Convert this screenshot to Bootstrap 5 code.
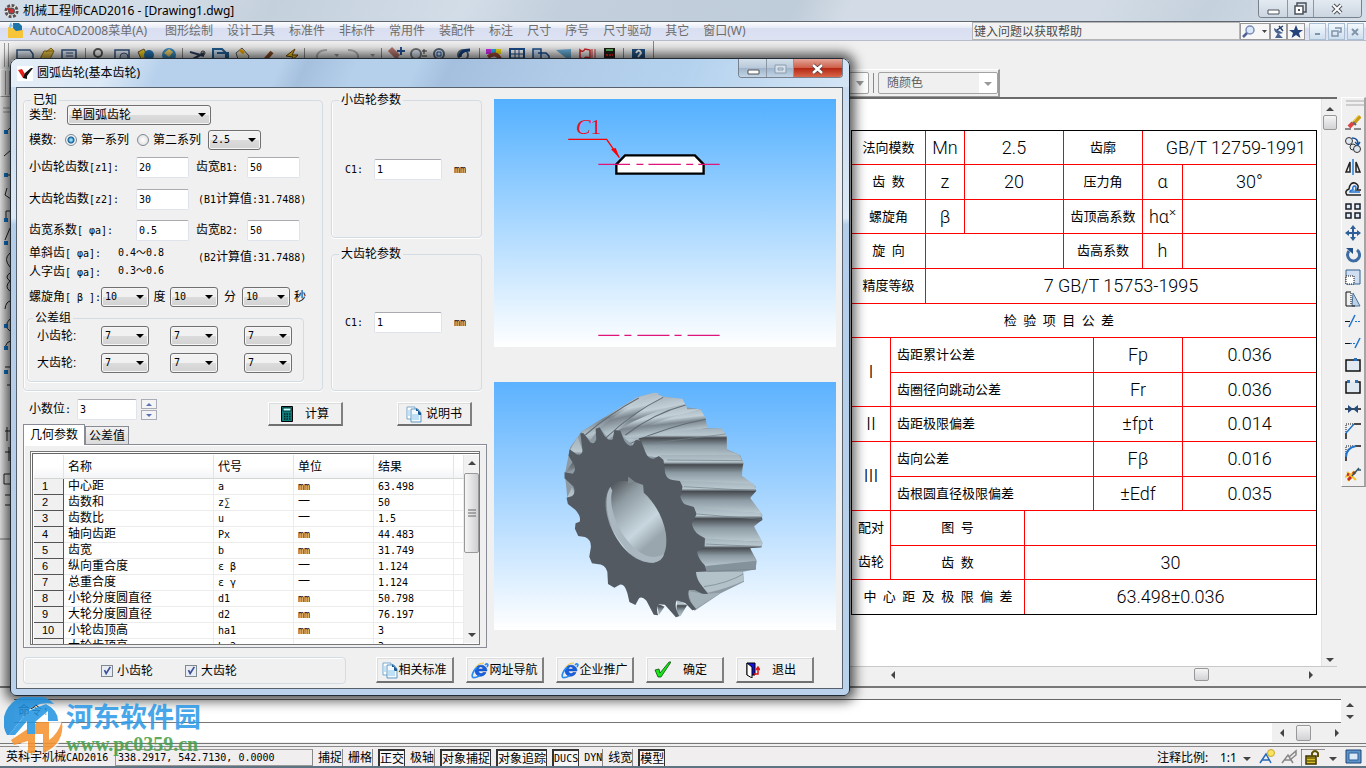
<!DOCTYPE html>
<html lang="zh-CN">
<head>
<meta charset="utf-8">
<meta name="viewport" content="width=device-width, initial-scale=1">
<title>机械工程师CAD2016 - [Drawing1.dwg]</title>
<link href="https://cdn.jsdelivr.net/npm/bootstrap@5.3.0/dist/css/bootstrap.min.css" rel="stylesheet">
<style>
body{font:12px/14px "Liberation Sans","Noto Sans CJK SC",sans-serif;color:#000;background:#f0f0f0;min-height:100vh;overflow:hidden}
.ui{font-family:"Noto Sans","Noto Sans CJK SC",sans-serif}
.ln{font-family:"DejaVu Sans Mono","Noto Sans CJK SC",monospace;font-size:10px}
svg{display:block;flex:none}
button{font:inherit}
/* application frame */
.app-title{height:22px;background:linear-gradient(115deg,#d3dde7 0 12%,#c4d0dc 20%,#d2dde8 34%,#c3cfdc 41%,#bfccd9 58%,#d3dce6 62% 80%,#c5d1dd 88%,#d5dfe9);border-bottom:1px solid #5f6770}
.win-btns{border:1px solid #77828e;border-top:0;border-radius:0 0 4px 4px;height:18px;overflow:hidden}
.win-btns button{border:0;border-right:1px solid #8b97a4;background:linear-gradient(#e3eaf1,#ccd6e1);padding:0;height:17px}
.win-btns button:last-child{border-right:0}
.menu-row{height:19px;background:linear-gradient(#fdfdff,#e6eaf6 35%,#d8dff0 36%,#dee3f4);border-bottom:1px solid #b6bccc}
.menu-row a{color:#6d6d6d;text-decoration:none;padding:0 7px;line-height:20px;white-space:nowrap}
.help-box{width:268px;height:18px;border:1px solid #b5b5b5;border-radius:0;background:#f1f1f1;padding:0 1px;font-size:12px;line-height:16px;color:#333}
.help-box::placeholder{color:#4a4a4a;opacity:1}
.help-btn{height:17px;border:1px solid #9a9a9a;background:#f7f7f7;padding:0}
.mdi-btn{width:17px;height:17px;border:1px solid #a9bfd4;background:linear-gradient(#f2f8fd,#cfdfee);padding:0;margin-right:2px}
.tool-zone{height:56px}
.tools{height:28px}
.vsep{width:1px;height:14px;background:#888}
.prop-bar{height:28px;border:1px solid #fff;border-right:2px solid #9a9a9a;border-bottom-color:#9a9a9a}
.prop-sel{width:120px;height:22px;border:1px solid #a3a3a3;border-radius:2px;background-color:#f0f0f0;color:#5f5f5f;padding:0 8px;font-size:12px;line-height:18px}
.work{flex:1 1 auto;min-height:0}
.strip{width:18px;border-right:1px solid #777;background:#f0f0f0}
.sheet{background:#fff;border-top:2px solid #6b6b6b}
.sb-v{width:16px;background:#f0f0f0;border-left:1px solid #e3e3e3}
.sb-h{height:16px;background:#f0f0f0;border-top:1px solid #c9c9c9}
.thumb{border:1px solid #989898;border-radius:2px;background:linear-gradient(#f5f5f5,#d2d2d6)}
.up,.dn,.lf,.rt{width:0;height:0;border:4px solid transparent;flex:none}
.up{border-bottom-color:#444;border-top-width:0}.dn{border-top-color:#444;border-bottom-width:0}
.lf{border-right-color:#444;border-left-width:0}.rt{border-left-color:#444;border-right-width:0}
.palette{width:25px;border:1px solid #fff;border-right:2px solid #a5a5a5;border-bottom:1px solid #8e8e8e}
.palette button{border:0;background:none;padding:3px 3px;height:22px}
/* drawing table */
.spec{width:465px;table-layout:fixed;border-collapse:collapse;outline:1px solid #000;outline-offset:-1px;font:300 18px/20px Roboto,"Noto Sans CJK SC",sans-serif;margin:31px 4px 0 0}
.spec td{border:1px solid #f00;padding:0;text-align:center;vertical-align:middle;white-space:pre}
.spec tr{height:34px}.spec tr.tall{height:35px}
.spec .cn{font-size:13px;line-height:20px;font-weight:400}
.spec .lt{text-align:left;padding-left:6px}
.spec .rt-txt{text-align:right;padding-right:10px}
.spec sup{line-height:10px}
.pair{line-height:34px}
/* command panel and status bar */
.cmd{height:56px;border-top:2px solid #777;padding:11px 8px 0 14px;background:#f0f0f0}
.cmd-hist{height:24px;background:#fff;border-top:1px solid #666;border-bottom:1px solid #777}
.cmd-in{height:19px;background:#fff;border:0;border-radius:0;padding:0 4px;font-size:12px}
.status{height:22px;border-top:1px solid #8a8a8a;padding:2px 4px 0 6px;background:#f0eeee;white-space:pre;border-bottom:2px solid #5f7482;line-height:17px}
.status-rule{height:1px;background:#777;margin-top:1px;margin-bottom:2px}
.st-coord{width:198px;border:1px solid #999;border-right-color:#888;height:17px;padding-left:2px;line-height:15px}
.st{border:0;border-right:1px solid #888;background:none;padding:0;height:17px;line-height:16px}
.st.on{border:2px solid #333;border-right-width:1px;border-bottom:0;background:#f7f7f7;line-height:15px}
/* dialog */
.dlg{position:absolute;left:10px;top:58px;width:840px;border:1px solid #222a33;border-radius:8px 8px 6px 6px;background:linear-gradient(#c5d9ee 0,#dce9f6 25%,#b4cde9 26%,#b9d1ea);box-shadow:0 0 12px 5px rgba(0,0,0,.65);padding:0 6px 6px 5px}
.dlg-title{height:28px;margin:0 -6px 0 -5px;padding:0 6px 0 6px;border-radius:7px 7px 0 0;background:linear-gradient(115deg,#e6eff8 0,#dbe8f5 12%,#b7d1ec 18% 32%,#a5c0dd 35%,#b5d0eb 41% 48%,#a5c0de 52%,#b0cbe8 65%,#b4d2ee 80%,#d4e5f5)}
.dlg .win-btns{height:19px}.dlg .win-btns button{height:18px;background:linear-gradient(#d3dfea,#b9c9da 48%,#9fb4ca 50%,#c2d4e6)}
.dlg .win-btns .x-red{background:linear-gradient(#e3a598,#cf5f4a 48%,#b32510 50%,#d9674a)}
.client{border:1px solid #56616d;background:#f0f0f0;padding:0 6px 4px}
.left-col{width:464px;padding-top:7px}
fieldset.grp{border:1px solid #d3dbe3;border-radius:4px;box-shadow:inset 1px 0 #fff,0 1px #fff;padding:0 0 0 5px}
.grp legend{float:none;width:auto;margin:0 0 0 2px;padding:0 2px;font-size:12px;line-height:10px;height:10px}
.f-known{width:300px;height:296px}
.f-side{width:151px}
.combo,.combo:focus{height:20px;border:1px solid #707070;border-radius:3px;padding:0 14px 0 3px;line-height:16px;color:#000;background:url("data:image/svg+xml,%3Csvg xmlns='http://www.w3.org/2000/svg' width='8' height='4' viewBox='0 0 8 4'%3E%3Cpath d='M0 0h8L4 4z'/%3E%3C/svg%3E") no-repeat right 4px center/8px 4px,linear-gradient(#f1f1f1 50%,#dcdcdc 50%,#d2d2d2);box-shadow:inset 0 0 0 1px #f6f6f6;font-size:12px}
.combo.ln{font-size:10px}
.w48{width:48px;flex:none}.w53{width:53px;flex:none}
.fld{height:21px;border:1px solid #dfe4ec;border-top-color:#a9abb0;border-radius:2px;padding:0 2px;color:#000;line-height:18px;background:#fff;font-size:10px}
.sl{flex:none;white-space:pre}
.l107{width:107px}.l72{width:72px}.l64{width:64px}.l51{width:51px}.l38{width:38px}.l29{width:29px}
input[type=radio].form-check-input,input[type=checkbox].form-check-input{width:12px;height:12px;margin:0;border:1px solid #808890;flex:none}
input[type=radio].form-check-input{background:radial-gradient(#fff,#d8d8d8)}
input[type=radio].form-check-input:checked{background:radial-gradient(#8fdcff 0 1px,#14588c 3px,#eef3f7 4px)}
input[type=checkbox].form-check-input{border-radius:0;background-color:#e8edf4}
input[type=checkbox].form-check-input:checked{background-image:url("data:image/svg+xml,%3Csvg xmlns='http://www.w3.org/2000/svg' viewBox='0 0 12 12'%3E%3Cpath d='M3 5l2 4 5-8' fill='none' stroke='%233d4f96' stroke-width='2'/%3E%3C/svg%3E");border-color:#808890}
.cbtn{border:1px solid #fff;border-right:2px solid #808080;border-bottom:2px solid #707070;border-radius:0;background:#f0f0f0;padding:0;color:#000;font-size:12px;line-height:14px;box-shadow:inset 1px 1px #dcdcdc;display:flex;align-items:center;justify-content:center;white-space:nowrap}
.cbtn.a{width:75px;height:24px}.cbtn.b{width:78px;height:26px}
.spin{width:16px;height:21px}
.spin button{height:10px;border:1px solid #a9adb8;background:#f4f4f4;padding:0;display:flex;align-items:center;justify-content:center}
.spin .up,.spin .dn{border-left-width:3px;border-right-width:3px}
.spin .up{border-bottom:3px solid #5a72b5}.spin .dn{border-top:3px solid #5a72b5}
.tabs{height:18px}
.tabs button{border:1px solid #898c95;border-bottom:0;padding:0 3px;background:linear-gradient(#f2f2f2,#dadada);height:18px}
.tabs button.act{background:#fff;height:21px;margin-top:-2px;margin-bottom:-1px;padding:0 6px;z-index:1;border-color:#898c95}
.pane{height:204px;border:1px solid #898c95;padding:6px 6px 2px 6px;box-shadow:inset 1px 1px #fff}
.listbox{height:194px;border:1px solid #777;outline:0;box-shadow:inset 1px 1px #fff,inset 2px 2px #666;padding:3px 2px 1px 3px;background:#fff;overflow:hidden}
.res{table-layout:fixed;width:430px;border-collapse:separate;border-spacing:0}
.res th{font-weight:400;height:24px;padding:0 4px;border-right:1px solid #e2e4e8;border-bottom:1px solid #d5d5d5;background:linear-gradient(#fff 50%,#f3f4f6)}
.res td{height:16px;line-height:15px;padding:0 4px;border-right:1px solid #ececec;border-bottom:1px solid #ececec;white-space:nowrap}
.res td:first-child{background:#f0f0f0;border-right-color:#555;border-bottom-color:#555;padding-left:8px;font-size:11px}
.lb-sb{width:16px;background:#f1f1f1}
.pics{padding:11px 0 0 7px;gap:35px}
.pics svg{width:100%;height:248px}
.chk-box{width:323px;height:27px;border:1px solid #d3dbe3;border-radius:4px;box-shadow:inset 1px 1px #fff}
/* site mark over the command panel */
.site{position:absolute;left:4px;top:697px;opacity:.88}
.site-n{font:700 27px/30px "Noto Sans CJK SC",sans-serif;color:#2f9be8}
.site-u{font:700 20px/26px "Liberation Serif",serif;color:#46a04a}
</style>
</head>
<body class="d-flex flex-column vh-100">
<svg width="0" height="0" class="position-absolute">
  <symbol id="doc" viewBox="0 0 16 18"><path d="M1 2h8v12H1z" fill="#fff" stroke="#79a9cf"/><path d="M5 4h7l3 4v9H5z" fill="#f2faff" stroke="#5e97bf"/><path d="M10 3l5 5v2h-3V6h-2z" fill="#1d5b94"/><path d="M6 10h7M6 12h7M6 14h7M2 6h2M2 8h2M2 10h2" stroke="#8cc4ea"/></symbol>
  <symbol id="ie" viewBox="0 0 18 18"><path d="M15 11.500C13 17 4 16.500 4 9.500 4 2.500 16 2 16 10H7.500C8 13 11 13 12 11.500zM7.500 8H12C11.500 5 8 5 7.500 8" fill="#1560e0" stroke="#0a3ba8" stroke-width=".5"/><path d="M14 4c2-2 4-1 2 2M6 6C2 10 0 15 2 16.500c2 .6 5-1 7-2" fill="none" stroke="#2a8cf0" stroke-width="1.700"/><path d="M4 7Q7 2 13 2" fill="none" stroke="#e9c93b"/></symbol>
</svg>

<header class="app-title ui d-flex align-items-center">
  <svg class="ms-1" width="15" height="16" viewBox="0 0 16 16"><circle cx="8" cy="8" r="6" fill="#eee" stroke="#5a5050" stroke-width="3" stroke-dasharray="3 1.600"/><circle cx="8" cy="8" r="3" fill="#c33" stroke="#555" stroke-width="1.500"/><path d="M3 5l4 2" stroke="#c22" stroke-width="2"/></svg>
  <span class="ps-1">机械工程师CAD2016 - [Drawing1.dwg]</span>
  <div class="win-btns d-flex ms-auto me-1 align-self-start">
    <button style="width:29px" aria-label="最小化"><svg width="29" height="16"><path d="M9 9h11v4H9z" fill="#fff" stroke="#4c525a"/></svg></button>
    <button style="width:26px" aria-label="还原"><svg width="26" height="16"><path d="M9 2h9v9H9z" fill="none" stroke="#4c525a" stroke-width="1.500"/><path d="M7 5h8v8H7z" fill="#fff" stroke="#4c525a" stroke-width="1.500"/><path d="M10 8h2v2h-2z" fill="#4c525a"/></svg></button>
    <button style="width:47px" aria-label="关闭"><svg width="46" height="16"><path d="M19 4l8 8M27 4l-8 8" stroke="#4c525a" stroke-width="4"/><path d="M19 4l8 8M27 4l-8 8" stroke="#fff" stroke-width="2"/></svg></button>
  </div>
</header>

<nav class="menu-row ui d-flex align-items-center">
  <svg class="ms-2" width="15" height="18" viewBox="0 0 15 18"><path d="M5 1h6l3 3v11H5z" fill="#1c75a8"/><path d="M0 5l5 1 3 3 7-1v8H0z" fill="#f7c53a"/><path d="M3 0l1 3 2 1-3 1-1 2-1-3z" fill="#7fc6ee"/></svg>
  <a href="#" class="me-1">AutoCAD2008菜单(A)</a><a href="#">图形绘制</a><a href="#">设计工具</a><a href="#">标准件</a><a href="#">非标件</a><a href="#">常用件</a><a href="#">装配件</a><a href="#">标注</a><a href="#">尺寸</a><a href="#">序号</a><a href="#">尺寸驱动</a><a href="#">其它</a><a href="#">窗口(W)</a>
  <input class="help-box ms-auto" type="text" placeholder="键入问题以获取帮助" aria-label="帮助">
  <button class="help-btn" aria-label="搜索"><svg width="28" height="15"><circle cx="9" cy="6" r="4" fill="#d9e8fa" stroke="#7c8bb5" stroke-width="1.500"/><path d="M6 9l-4 4" stroke="#4e6196" stroke-width="2.500"/><path d="M21 6h5l-2.500 3z" fill="#444"/></svg></button>
  <button class="help-btn" aria-label="通讯中心"><svg width="15" height="15"><path d="M3 4c0 5 5 7 9 5zM7 9l-3 5h8z" fill="#4c6590"/><path d="M6 6l6-4M8 2l4 5" stroke="#24416f" stroke-width="1.500"/></svg></button>
  <button class="help-btn me-1" aria-label="收藏夹"><svg width="16" height="15"><path d="M8 1l2 5h5l-4 3 1.500 5L8 11l-4.500 3L5 9 1 6h5z" fill="#27437c"/></svg></button>
  <button class="mdi-btn" aria-label="最小化文档"><svg width="15" height="15"><path d="M5 10h5" stroke="#8094aa" stroke-width="2"/></svg></button>
  <button class="mdi-btn" aria-label="还原文档"><svg width="15" height="15"><path d="M6 4h6v4h-2M3 7h6v5H3z" fill="none" stroke="#8094aa" stroke-width="1.500"/></svg></button>
  <button class="mdi-btn" aria-label="关闭文档"><svg width="15" height="15"><path d="M4 5l6 6M10 5l-6 6" stroke="#8094aa" stroke-width="2"/></svg></button>
</nav>

<div class="tool-zone">
  <div class="tools">
    <svg width="656" height="28" viewBox="0 42 656 28" fill="none">
      <path d="M4.500 44v24M8.500 44v24" stroke="#999"/>
      <path d="M17 51h13l3 4v10H17zM62 51h14v13H62zM115 51h14v13h-14z" fill="#e3edf8" stroke="#35557e" stroke-width="1.500"/><path d="M66 54h7M66 57h7" stroke="#2e4d80"/>
      <path d="M40 60l4-8h10l-4 8zM46 53l5-4 3 3" fill="#e9c44b" stroke="#907018"/>
      <circle cx="98" cy="54" r="4" stroke="#555" stroke-width="2"/><circle cx="124" cy="58" r="4" fill="#bcd" stroke="#457"/>
      <path d="M138 53l6-3 4 8-7 2z" fill="#f0d020" stroke="#653"/><circle cx="149" cy="56" r="5" fill="#2678b8"/><circle cx="169" cy="56" r="7" fill="#3a92c8"/><path d="M164 54l5-4 4 3-4 5z" fill="#f4d06a"/>
      <path d="M190 53l14 4M193 60l11-6" stroke="#2e4060" stroke-width="2"/><circle cx="203" cy="54" r="2" stroke="#333"/>
      <path d="M213 50h9l4 4v9h-13zM217 54h11v10" fill="#cadff2" stroke="#215f92" stroke-width="2"/><path d="M236 54l6-5 7 8-2 6h-8z" fill="#e4e0c7" stroke="#555"/><path d="M240 51l4 3" stroke="#eaa000" stroke-width="3"/>
      <path d="M264 62l8-9" stroke="#854a23" stroke-width="4"/><path d="M286 57l9-7-3 6h6l-8 7 3-5z" fill="#f8cf22" stroke="#654300"/>
      <path d="M327 51c-9 0-12 5-9 12M348 51c9 0 12 5 9 12" stroke="#b0b0b0" stroke-width="2"/><path d="M334 55h5l-2 3zM370 55h5l-2 3z" fill="#999"/>
      <path d="M389 51l10 10M391 49l8 8" stroke="#b97970" stroke-width="3"/><path d="M401 48v8M397 52h8" stroke="#285394" stroke-width="2"/>
      <circle cx="416" cy="55" r="5" fill="#dfe9f5" stroke="#777" stroke-width="2"/><path d="M422 52h5M424 50v5M422 57h5" stroke="#333"/><circle cx="439" cy="55" r="5" fill="#dfe9f5" stroke="#567" stroke-width="2"/><path d="M437 53h4v4h-4z" stroke="#15539b"/><circle cx="463" cy="56" r="5" stroke="#567" stroke-width="2"/><path d="M460 58q0-7 10-7" stroke="#113d7b" stroke-width="3"/>
      <path d="M486 50h5v5h-5z" fill="#d02af0"/><path d="M491 50h5v5h-5z" fill="#22b7ee"/><path d="M496 50h5v5h-5z" fill="#f2df10"/><path d="M488 58q8-6 12 2" stroke="#a84d38" stroke-width="4"/>
      <path d="M510 50h14v14h-14z" fill="#fff" stroke="#1d4f8e" stroke-width="2"/><path d="M511 55h12M511 59h12M515 51v10M519 51v10" stroke="#1d4f8e"/><path d="M533 50h8v10h-8zM538 54h8l3 3v4" fill="#c8def4" stroke="#1d4f8e" stroke-width="1.500"/><path d="M556 51l10 8h5v-9z" fill="#68aed8"/><path d="M580 51q3 3 5-1l5 1v8q-5-2-6 1l-4-1z" stroke="#e02424" stroke-width="1.500"/><path d="M592 50v10M595 50v10" stroke="#c33"/>
      <path d="M604 49h11v12h-11z" fill="#241d1a"/><path d="M606 51h7" stroke="#55b95c" stroke-width="2"/><path d="M606 56h7" stroke="#d22" stroke-width="2" stroke-dasharray="2 1"/><path d="M632 50h13v12h-13z" fill="#235585"/><path d="M636 54q3-5 5 0l-3 4" stroke="#fff" stroke-width="2"/>
      <path d="M85.500 49v12M182.500 49v12M304.500 49v12M381.500 49v12M479.500 49v12M623.500 49v12M653.500 42v20" stroke="#888"/>
    </svg>
  </div>
  <div class="d-flex">
    <div class="prop-bar d-flex align-items-center" style="width:1000px">
      <svg class="ms-1" width="6" height="24"><path d="M.500 0v24M4.500 0v24" stroke="#999"/></svg>
      <select class="form-select prop-sel ui ms-auto me-1" aria-label="线宽控制" style="width:90px;background-image:url(&quot;data:image/svg+xml,%3Csvg xmlns='http://www.w3.org/2000/svg' viewBox='0 0 16 20'%3E%3Cpath d='M0 0h16v20H0z' fill='%23fff'/%3E%3Cpath d='M4 8h8l-4 5z' fill='%23999'/%3E%3C/svg%3E&quot;);background-position:right 0 center;background-size:16px 20px"></select>
      <span class="vsep me-1" style="height:20px"></span>
      <select class="form-select prop-sel ui me-0" aria-label="打印样式" style="background-image:url(&quot;data:image/svg+xml,%3Csvg xmlns='http://www.w3.org/2000/svg' viewBox='0 0 18 20'%3E%3Cpath d='M0 0h18v20H0z' fill='%23fff'/%3E%3Cpath d='M5 9h8l-4 4z' fill='%23999'/%3E%3C/svg%3E&quot;);background-position:right 0 center;background-size:18px 20px"><option>随颜色</option></select>
    </div>
  </div>
</div>

<main class="work d-flex">
  <aside class="strip pt-2">
    <svg width="14" height="440" viewBox="0 98 14 440" fill="none" stroke="#222"><path d="M3 101h10M3 105h10" stroke="#999"/><path d="M5 126l8-8M4 149l7-6M5 168h8M7 181l-2 7 6 4M6 212v-8h6M5 233l5-12M10 246q-7 6 0 14M10 266q-6 4 0 8q-6 6 0 10M5 302q1-8 6-8M10 312q-7 7 0 12M5 340q2-6 6-6M5 360h6v6M7 378h6v7M5 424h8M7 420v14M5 445h8M9 440v14M4 467h10v10H4zM5 488h9v10H5" /><path d="M4 123h4v4H4zM4 166h4v4H4zM4 211h4v4H4zM4 234h4v4H4zM4 317h4v4H4zM4 339h4v4H4zM4 363h4v4H4z" fill="#1578c8" stroke="none"/><path d="M0 532h14" stroke="#777"/></svg>
  </aside>
  <section class="d-flex flex-column flex-grow-1">
    <div class="sheet d-flex flex-grow-1 justify-content-end">
      <table class="spec align-self-start">
        <colgroup><col style="width:39px"><col style="width:35px"><col style="width:39px"><col style="width:60px"><col style="width:39px"><col style="width:30px"><col style="width:49px"><col style="width:40px"><col style="width:134px"></colgroup>
        <tr><td colspan="2" class="cn">法向模数</td><td>Mn</td><td colspan="2">2.5</td><td colspan="2" class="cn">齿廓</td><td colspan="2" class="rt-txt">GB/T 12759-1991</td></tr>
        <tr class="tall"><td colspan="2" class="cn">齿  数</td><td>z</td><td colspan="2">20</td><td colspan="2" class="cn">压力角</td><td>α</td><td>30°</td></tr>
        <tr><td colspan="2" class="cn">螺旋角</td><td>β</td><td colspan="2"></td><td colspan="2" class="cn">齿顶高系数</td><td>hα<sup>×</sup></td><td></td></tr>
        <tr class="tall"><td colspan="2" class="cn">旋  向</td><td colspan="3"></td><td colspan="2" class="cn">齿高系数</td><td>h</td><td></td></tr>
        <tr class="tall"><td colspan="2" class="cn">精度等级</td><td colspan="7">7 GB/T 15753-1995</td></tr>
        <tr><td colspan="9" class="cn" style="padding-right:50px">检  验  项  目  公  差</td></tr>
        <tr class="tall"><td rowspan="2">Ⅰ</td><td colspan="5" class="cn lt">齿距累计公差</td><td colspan="2">Fp</td><td>0.036</td></tr>
        <tr><td colspan="5" class="cn lt">齿圈径向跳动公差</td><td colspan="2">Fr</td><td>0.036</td></tr>
        <tr class="tall"><td>Ⅱ</td><td colspan="5" class="cn lt">齿距极限偏差</td><td colspan="2">±fpt</td><td>0.014</td></tr>
        <tr class="tall"><td rowspan="2">Ⅲ</td><td colspan="5" class="cn lt">齿向公差</td><td colspan="2">Fβ</td><td>0.016</td></tr>
        <tr><td colspan="5" class="cn lt">齿根圆直径极限偏差</td><td colspan="2">±Edf</td><td>0.035</td></tr>
        <tr class="tall"><td rowspan="2" class="cn"><div class="pair">配对<br>齿轮</div></td><td colspan="3" class="cn">图  号</td><td colspan="5"></td></tr>
        <tr><td colspan="3" class="cn">齿  数</td><td colspan="5">30</td></tr>
        <tr class="tall"><td colspan="4" class="cn">中  心  距  及  极  限  偏  差</td><td colspan="5">63.498±0.036</td></tr>
      </table>
      <div class="sb-v d-flex flex-column align-items-center pt-2"><span class="up"></span><span class="thumb mt-1" style="width:14px;height:15px"></span><span class="dn mt-auto mb-1"></span></div>
    </div>
    <div class="sb-h d-flex justify-content-end align-items-center"><div class="d-flex align-items-center" style="width:446px"><span class="lf"></span><span class="thumb ms-auto" style="width:15px;height:13px;margin-right:100px"></span><span class="rt"></span><span style="width:24px"></span></div></div>
    <div class="pt-1"></div>
  </section>
  <aside class="palette d-flex flex-column align-self-start ms-1">
    <svg width="20" height="14" class="ms-1"><path d="M0 3h18M0 7h18" stroke="#aaa"/></svg>
    <button aria-label="删除"><svg width="16" height="16" fill="none"><path d="M0 14h6M9 14h7" stroke="#222"/><path d="M15 1l-7 8" stroke="#c89b10" stroke-width="4"/><path d="M14 0l-7 8" stroke="#f5e26a"/><path d="M8 8l-4 4" stroke="#d44" stroke-width="4"/><path d="M8 7l3 3" stroke="#667" stroke-width="2"/></svg></button>
    <button aria-label="复制"><svg width="16" height="16" fill="#dfe6ee" stroke="#333"><circle cx="4" cy="4" r="3.500"/><circle cx="8" cy="10" r="3"/><circle cx="12" cy="12" r="3.500"/><path d="M7 1q6 0 6 6M10 5l3 3 2-3" fill="none" stroke="#18539a" stroke-width="1.500"/></svg></button>
    <button aria-label="镜像"><svg width="16" height="16" fill="none" stroke="#222" stroke-width="1.500"><path d="M5 3v10H1zM11 3v10h4z"/><path d="M8 0v16" stroke="#2283dd"/></svg></button>
    <button aria-label="偏移"><svg width="16" height="16" fill="none" stroke="#222" stroke-width="1.500"><path d="M16 14H2q-3-4 2-6Q5 1 10 2q5 2 2 7h4"/><path d="M15 11H5q0-2 3-2-1-4 2-4 2 1 0 5" stroke="#2474cf"/></svg></button>
    <button aria-label="阵列"><svg width="16" height="16" fill="#dfe9f7" stroke="#181d28" stroke-width="1.500"><path d="M1 1h5v5H1zM10 1h5v5h-5zM1 10h5v5H1zM10 10h5v5h-5z"/></svg></button>
    <button aria-label="移动"><svg width="16" height="16"><path d="M8 0l3 4H9v3h3V5l4 3-4 3V9H9v3h2l-3 4-3-4h2V9H4v2L0 8l4-3v2h3V4H5z" fill="#2e5f98"/></svg></button>
    <button aria-label="旋转"><svg width="16" height="16" fill="none"><path d="M4 4a6 6 0 1 0 8-1" stroke="#3d6ca3" stroke-width="3"/><path d="M1 1h7v6z" fill="#24508a"/></svg></button>
    <button aria-label="缩放"><svg width="16" height="16" fill="none"><path d="M1 1h14v14H1z" fill="#cfdff1" stroke="#35608e"/><path d="M1 7h8v8H1z" fill="#fff" stroke="#111" stroke-dasharray="1 1"/></svg></button>
    <button aria-label="拉伸"><svg width="16" height="16" fill="none"><path d="M8 2l7 13H7z" fill="#bcd1e6" stroke="#4d7298"/><path d="M6 1H1v14h9" stroke="#111"/><path d="M6 2v12" stroke="#111" stroke-dasharray="1 1"/></svg></button>
    <button aria-label="修剪"><svg width="16" height="16" fill="none"><path d="M0 8.500h5" stroke="#111"/><path d="M10 8.500h6" stroke="#2174cd" stroke-dasharray="2 1"/><path d="M4 14l6-12" stroke="#2174cd" stroke-width="1.500"/></svg></button>
    <button aria-label="延伸"><svg width="16" height="16" fill="none"><path d="M0 8.500h5" stroke="#111"/><path d="M5 8.500h6" stroke="#2174cd" stroke-dasharray="2 1"/><path d="M10 13l5-10" stroke="#2174cd" stroke-width="1.500"/></svg></button>
    <button aria-label="打断于点"><svg width="16" height="16"><path d="M1 3h14v11H1z" fill="#e0e8f2" stroke="#111" stroke-width="1.500"/><path d="M9 1h3v3H9z" fill="#2a71ba"/></svg></button>
    <button aria-label="打断"><svg width="16" height="16"><path d="M4 3H1v11h14V3h-3" fill="#e0e8f2" stroke="#111" stroke-width="1.500"/><path d="M2 1h3v3H2zM10 1h3v3h-3z" fill="#2a71ba"/></svg></button>
    <button aria-label="合并"><svg width="16" height="16"><path d="M0 8h16" stroke="#111" stroke-width="1.500"/><path d="M3 4l5 4-5 4zM13 4L8 8l5 4z" fill="#244b79"/></svg></button>
    <button aria-label="倒角"><svg width="16" height="16" fill="none"><path d="M1 16v-6M9 1h7" stroke="#111" stroke-width="1.500"/><path d="M1 9V1h8" stroke="#111" stroke-dasharray="1 1"/><path d="M1 10l8-9" stroke="#2174cd" stroke-width="1.500"/></svg></button>
    <button aria-label="圆角"><svg width="16" height="16" fill="none"><path d="M1 16v-5M10 1h6" stroke="#111" stroke-width="1.500"/><path d="M1 9V1h8" stroke="#111" stroke-dasharray="1 1"/><path d="M1 12q0-9 10-11" stroke="#2174cd" stroke-width="2"/></svg></button>
    <button aria-label="分解"><svg width="16" height="16" fill="none"><path d="M2 5l9 8M0 10l11-5M3 14l6-10" stroke="#f7c421" stroke-width="2"/><path d="M3 13l3-3M8 7l2-2M2 7l2 1" stroke="#c92c1e" stroke-width="3"/><path d="M7 9l7-8M13 3h3" stroke="#34566c" stroke-width="1.500"/></svg></button>
  </aside>
</main>

<section class="cmd ln">
  <div class="d-flex"><div class="cmd-hist flex-grow-1 ps-1 pt-1" style="font-size:12px">命令:</div><div class="d-flex flex-column justify-content-around align-items-center" style="width:17px"><span class="up"></span><span class="dn"></span></div></div>
  <div class="d-flex"><input class="cmd-in flex-grow-1" aria-label="命令行"><div class="d-flex align-items-center ps-2" style="width:86px"><span class="lf me-2"></span><span class="thumb ms-1" style="width:15px;height:16px"></span><span class="rt ms-4"></span></div></div>
</section>
<div class="status-rule"></div>
<footer class="status ln d-flex">
  <span style="font-size:12px;width:109px">英科宇机械<span class="ln">CAD2016</span></span>
  <span class="st-coord">338.2917, 542.7130, 0.0000</span>
  <div class="d-flex ui" style="font-size:12px;gap:5px;padding-left:5px">
    <button class="st">捕捉</button><button class="st">栅格</button><button class="st on">正交</button><button class="st">极轴</button><button class="st on">对象捕捉</button><button class="st on">对象追踪</button><button class="st on ln">DUCS</button><button class="st ln">DYN</button><button class="st">线宽</button><button class="st on">模型</button>
  </div>
  <div class="d-flex ms-auto ui" style="font-size:12px">
    <span style="width:63px">注释比例:</span><span style="width:23px">1:1</span><span class="dn mt-2"></span>
    <svg class="ms-2" width="18" height="16" fill="none"><path d="M1 14L7 5l5 9M3 11h8" stroke="#2469b8" stroke-width="1.500"/><circle cx="12" cy="4" r="3.500" fill="#f9e35e" stroke="#c8a730"/></svg>
    <svg class="ms-1" width="20" height="16" fill="none"><path d="M1 14L7 6l5 8M3 11h8M8 8l7-6v4l-5 4" stroke="#888" stroke-width="1.500"/></svg>
    <svg width="24" height="17" fill="none"><path d="M0 17V0h24" stroke="#333"/><path d="M5 7h10v8H5z" fill="#d8bf23" stroke="#3a3200" stroke-width="1.500"/><path d="M6 9h8M6 12h8" stroke="#3a3200"/><path d="M11 7V4q3-4 6 0v4" stroke="#5c5200" stroke-width="2"/></svg>
    <span class="dn mt-2 ms-1"></span>
    <svg class="ms-2" width="17" height="15"><path d="M1 1h15v13H1z" fill="#5e93c9" stroke="#1d4778"/><path d="M4 4h9v7H4z" fill="#dceaf8" stroke="#2c5e96"/></svg>
  </div>
</footer>

<div class="dlg" role="dialog" aria-label="圆弧齿轮">
  <div class="dlg-title ui d-flex align-items-center">
    <svg width="16" height="15"><path d="M0 0h16v15H0z" fill="#fff"/><path d="M1 4l4-1 3 5v4H6z" fill="#e8201a"/><path d="M6 12l2-5 6-5h2l-6 8v3z" fill="#111"/></svg>
    <span class="ps-1">圆弧齿轮(基本齿轮)</span>
    <div class="win-btns d-flex ms-auto align-self-start">
      <button style="width:28px" aria-label="最小化"><svg width="28" height="17"><path d="M9 10h11v4H9z" fill="#fff" stroke="#555"/></svg></button>
      <button style="width:27px" disabled aria-label="最大化"><svg width="27" height="17"><path d="M8 5h11v8H8zM11 8h5v2h-5z" fill="#d5e0ea" stroke="#8b9cae"/></svg></button>
      <button class="x-red" style="width:48px" aria-label="关闭"><svg width="47" height="17"><path d="M19 5l9 8M28 5l-9 8" stroke="#5c3a3a" stroke-width="4"/><path d="M19 5l9 8M28 5l-9 8" stroke="#fff" stroke-width="2.500"/></svg></button>
    </div>
  </div>
  <div class="client">
    <div class="d-flex">
      <div class="left-col">
        <div class="d-flex" style="gap:8px">
          <fieldset class="grp f-known"><legend>已知</legend>
            <div class="d-flex align-items-center"><label class="sl l38" for="ty">类型:</label><select id="ty" class="form-select combo" style="width:144px"><option>单圆弧齿轮</option></select></div>
            <div class="d-flex align-items-center" style="margin-top:5px"><span class="sl" style="width:36px">模数:</span>
              <input class="form-check-input" type="radio" name="ser" id="s1" checked><label class="sl" for="s1" style="width:60px;padding-left:4px">第一系列</label>
              <input class="form-check-input" type="radio" name="ser" id="s2"><label class="sl" for="s2" style="width:59px;padding-left:4px">第二系列</label>
              <select class="form-select combo ln w53" aria-label="模数"><option>2.5</option></select></div>
            <div class="d-flex align-items-center" style="margin-top:7px"><label class="sl l107" for="z1">小齿轮齿数<span class="ln">[z1]:</span></label><input id="z1" class="form-control fld ln w53" value="20"><label class="sl l51" for="b1" style="margin-left:7px">齿宽<span class="ln">B1:</span></label><input id="b1" class="form-control fld ln w53" value="50"></div>
            <div class="d-flex align-items-center" style="margin-top:11px"><label class="sl l107" for="z2">大齿轮齿数<span class="ln">[z2]:</span></label><input id="z2" class="form-control fld ln w53" value="30"><span class="sl" style="margin-left:9px"><span class="ln">(B1</span>计算值<span class="ln">:31.7488)</span></span></div>
            <div class="d-flex align-items-center" style="margin-top:10px"><label class="sl l107" for="fa">齿宽系数<span class="ln">[ φa]:</span></label><input id="fa" class="form-control fld ln w53" value="0.5"><label class="sl l51" for="b2" style="margin-left:7px">齿宽<span class="ln">B2:</span></label><input id="b2" class="form-control fld ln w53" value="50"></div>
            <div class="d-flex align-items-start" style="margin-top:3px;height:36px;line-height:18px"><span class="sl" style="width:89px">单斜齿<span class="ln">[ φa]:</span><br>人字齿<span class="ln">[ φa]:</span></span><span class="sl ln" style="width:80px">0.4～0.8<br>0.3～0.6</span><span class="sl mt-1"><span class="ln">(B2</span>计算值<span class="ln">:31.7488)</span></span></div>
            <div class="d-flex align-items-center" style="margin-top:7px"><span class="sl l72">螺旋角<span class="ln">[ β ]:</span></span><select class="form-select combo ln w48" aria-label="度"><option>10</option></select><span class="sl text-center" style="width:21px">度</span><select class="form-select combo ln w48" aria-label="分"><option>10</option></select><span class="sl text-center" style="width:24px">分</span><select class="form-select combo ln w48" aria-label="秒"><option>10</option></select><span class="sl ps-1">秒</span></div>
            <fieldset class="grp" style="width:277px;height:69px;margin:6px 0 0 -2px;padding-left:9px"><legend style="margin-left:-4px">公差组</legend>
              <div class="d-flex align-items-center" style="margin-top:3px"><span class="sl l64">小齿轮:</span><select class="form-select combo ln w48" aria-label="小齿轮 1"><option>7</option></select><select class="form-select combo ln w48" style="margin-left:21px" aria-label="小齿轮 2"><option>7</option></select><select class="form-select combo ln w48" style="margin-left:26px" aria-label="小齿轮 3"><option>7</option></select></div>
              <div class="d-flex align-items-center" style="margin-top:7px"><span class="sl l64">大齿轮:</span><select class="form-select combo ln w48" aria-label="大齿轮 1"><option>7</option></select><select class="form-select combo ln w48" style="margin-left:21px" aria-label="大齿轮 2"><option>7</option></select><select class="form-select combo ln w48" style="margin-left:26px" aria-label="大齿轮 3"><option>7</option></select></div>
            </fieldset>
          </fieldset>
          <div class="f-side d-flex flex-column" style="gap:11px">
            <fieldset class="grp" style="height:143px"><legend>小齿轮参数</legend><div class="d-flex align-items-center ln" style="padding:54px 0 0 8px"><label class="sl l29" for="c1">C1:</label><input id="c1" class="form-control fld ln" style="width:68px" value="1"><span style="margin-left:12px">mm</span></div></fieldset>
            <fieldset class="grp" style="height:142px"><legend>大齿轮参数</legend><div class="d-flex align-items-center ln" style="padding:53px 0 0 8px"><label class="sl l29" for="c2">C1:</label><input id="c2" class="form-control fld ln" style="width:68px" value="1"><span style="margin-left:12px">mm</span></div></fieldset>
          </div>
        </div>
        <div class="d-flex" style="margin-top:8px;height:27px;padding-left:6px">
          <label class="sl" for="dp" style="width:48px;line-height:20px">小数位<span class="ln">:</span></label><input id="dp" class="form-control fld ln" style="width:60px" value="3">
          <div class="spin d-flex flex-column justify-content-between" style="margin-left:4px"><button aria-label="增加"><span class="up"></span></button><button aria-label="减少"><span class="dn"></span></button></div>
          <button class="btn cbtn a" style="margin:3px 0 0 111px;gap:12px"><svg width="12" height="16"><path d="M.500.500h11v15H.500z" fill="#107c7c" stroke="#000"/><path d="M2 2h8v3H2z" fill="#bff" stroke="#033"/><path d="M3 8h7M3 10.500h7M3 13h7" stroke="#031f1f" stroke-width="1.500" stroke-dasharray="1.500 1"/></svg>计算</button>
          <button class="btn cbtn a" style="margin:3px 0 0 54px;gap:4px"><svg width="16" height="18"><use href="#doc"/></svg>说明书</button>
        </div>
        <div class="tabs d-flex"><button class="act">几何参数</button><button>公差值</button></div>
        <div class="pane"><div class="listbox d-flex">
          <table class="res flex-shrink-0"><colgroup><col style="width:30px"><col style="width:150px"><col style="width:80px"><col style="width:80px"><col style="width:80px"><col style="width:10px"></colgroup>
            <thead><tr><th></th><th>名称</th><th>代号</th><th>单位</th><th>结果</th><th></th></tr></thead>
            <tbody>
            <tr><td>1</td><td>中心距</td><td class="ln">a</td><td class="ln">mm</td><td class="ln">63.498</td><td></td></tr>
            <tr><td>2</td><td>齿数和</td><td class="ln">z∑</td><td>一</td><td class="ln">50</td><td></td></tr>
            <tr><td>3</td><td>齿数比</td><td class="ln">u</td><td>一</td><td class="ln">1.5</td><td></td></tr>
            <tr><td>4</td><td>轴向齿距</td><td class="ln">Px</td><td class="ln">mm</td><td class="ln">44.483</td><td></td></tr>
            <tr><td>5</td><td>齿宽</td><td class="ln">b</td><td class="ln">mm</td><td class="ln">31.749</td><td></td></tr>
            <tr><td>6</td><td>纵向重合度</td><td class="ln">ε β</td><td>一</td><td class="ln">1.124</td><td></td></tr>
            <tr><td>7</td><td>总重合度</td><td class="ln">ε γ</td><td>一</td><td class="ln">1.124</td><td></td></tr>
            <tr><td>8</td><td>小轮分度圆直径</td><td class="ln">d1</td><td class="ln">mm</td><td class="ln">50.798</td><td></td></tr>
            <tr><td>9</td><td>大轮分度圆直径</td><td class="ln">d2</td><td class="ln">mm</td><td class="ln">76.197</td><td></td></tr>
            <tr><td>10</td><td>小轮齿顶高</td><td class="ln">ha1</td><td class="ln">mm</td><td class="ln">3</td><td></td></tr>
            <tr><td></td><td>大轮齿顶高</td><td class="ln">ha2</td><td class="ln">mm</td><td class="ln">3</td><td></td></tr>
            </tbody></table>
          <div class="lb-sb d-flex flex-column align-items-center ms-auto" style="padding:6px 0"><span class="up"></span><span class="thumb d-flex flex-column align-items-center justify-content-center mt-2" style="width:15px;height:80px;background:linear-gradient(90deg,#f6f6f6,#cfcfd4)"><svg width="8" height="8"><path d="M0 1h8M0 4h8M0 7h8" stroke="#666"/></svg></span><span class="dn mt-auto"></span></div>
        </div></div>
      </div>
      <div class="pics d-flex flex-column flex-grow-1">
        <svg viewBox="12 27 1023 744" preserveAspectRatio="none">
          <defs><linearGradient id="sky" x2="0" y2="1"><stop offset="0" stop-color="#53b0ff"/><stop offset=".5" stop-color="#aad8ff"/><stop offset="1" stop-color="#fff"/></linearGradient></defs>
          <path d="M12 27h1023v744H12z" fill="url(#sky)"/>
          <text x="257" y="132" font-family="Liberation Serif,serif" font-size="66" fill="#e8102a"><tspan font-style="italic">C</tspan>1</text>
          <path d="M234 148h115l38 55" fill="none" stroke="#f00" stroke-width="4"/><path d="M362 178l14-4 12 31z" fill="#f00"/>
          <path d="M378 251v-28l26-27h209l26 27v28z" fill="#fff" stroke="#000" stroke-width="7"/>
          <path d="M324 223h95m19 0h21m15 0h97m16 0h21m15 0h64M324 736h63m15 0h21m18 0h96m15 0h21m18 0h96" stroke="#e0157a" stroke-width="3.500" fill="none"/>
        </svg>
        <svg viewBox="12 36 1023 744" preserveAspectRatio="none">
          <defs>
            <linearGradient id="sky2" x2="0" y2="1"><stop offset="0" stop-color="#5cb2ff"/><stop offset=".5" stop-color="#add8ff"/><stop offset="1" stop-color="#fff"/></linearGradient>
            <linearGradient id="tu" x1=".3" y1="0" x2=".6" y2="1"><stop offset="0" stop-color="#9aa8b1"/><stop offset=".35" stop-color="#c3d0d8"/><stop offset=".5" stop-color="#7b868e"/><stop offset=".75" stop-color="#b4c3cb"/><stop offset="1" stop-color="#8e9ba3"/></linearGradient>
            <linearGradient id="tv" x2="0" y2="1"><stop offset="0" stop-color="#a3b1ba"/><stop offset=".24" stop-color="#b9c7cf"/><stop offset=".33" stop-color="#464b50"/><stop offset=".6" stop-color="#8c9aa3"/><stop offset="1" stop-color="#bccad2"/></linearGradient>
            <linearGradient id="bore" x1=".2" y1="0" x2=".7" y2=".8"><stop offset="0" stop-color="#4c5155"/><stop offset=".3" stop-color="#8f9ba3"/><stop offset=".75" stop-color="#c8d7df"/><stop offset="1" stop-color="#9aa6ad"/></linearGradient>
          </defs>
          <path d="M12 36h1023v744H12z" fill="url(#sky2)"/>
          <path d="M224 312L240 232 273 185 440 82 490 68 520 80 570 86 585 112 630 118 650 175 693 176 708 200 708 238 748 255 758 280 753 318 795 350 778 385 815 435 812 450 790 470 815 520 812 532 778 534 797 570 795 598 757 605 760 635 690 670 612 722 590 700 480 680 300 400 232 390z" fill="#8d9aa3"/>
          <g fill="url(#tu)">
            <path d="M273 185L440 82 490 68 505 70 345 165 325 178 300 210z"/><path d="M328 172Q430 95 495 69L518 80 355 208z"/><path d="M355 208Q440 120 518 80L575 86 585 104 375 182z"/><path d="M378 184Q480 120 585 102L590 118 628 117 445 210 428 226z"/><path d="M400 200Q510 145 630 118L645 145 650 174 460 200 440 210z"/>
          </g>
          <g fill="none" stroke="#626b73" stroke-width="3"><path d="M345 205Q430 125 518 82M405 195Q490 130 585 105M420 220Q530 170 645 148M285 195Q360 130 445 84"/></g>
          <g fill="url(#tv)">
            <path d="M445 205Q560 175 693 175L708 198 708 240 748 255 519 262 500 262 470 258z"/>
            <path d="M510 255L745 254 758 280 750 315 788 342 570 345 545 330 524 320z"/>
            <path d="M565 332L788 341 797 362 778 384 812 430 612 420 575 402 570 375z"/>
            <path d="M610 412L812 430 815 450 788 468 815 515 642 508 612 488 604 460z"/>
            <path d="M640 505L815 516 812 532 778 535 797 575 648 592 625 570 618 545z"/>
            <path d="M560 690L590 705 570 738 556 742zM500 700L522 710 505 735z"/>
            <path d="M240 240L262 200 280 250 262 256zM224 310L248 275 256 295zM230 385L245 352 255 372z"/>
          </g>
          <path d="M645 588L797 572 795 598 650 606z" fill="#84929b"/><path d="M612 606L755 605 760 632Q710 655 652 668L620 635z" fill="#b3c1c9"/><path d="M590 662L640 672 690 668 610 720z" fill="#a3b1b9"/>
          <g fill="none" stroke="#72808a" stroke-width="2"><path d="M465 222L705 192M530 270L755 272M580 350L795 362M620 432L813 448M645 522L812 530M650 604L795 598M640 650Q710 640 758 612"/></g>
          <path d="M316 176L328 172 342 197Q355 214 367 208L372 180 390 182 402 212Q415 232 427 226L436 210 452 212 465 247Q473 268 490 266L505 258 519 270 524 310Q530 330 546 330L568 333 576 350 570 380Q575 402 590 405L610 411 618 432 604 460Q608 485 626 495L643 505 642 530 619 545Q625 570 642 585L648 604 616 606Q618 630 636 650L652 672 635 671 612 660 595 660Q590 680 600 696L617 718 605 721 583 698 558 691Q550 710 566 738L556 742 523 704 505 703Q496 716 503 736L490 734 468 692Q452 676 445 686L435 705 417 696 411 670Q403 640 388 644L372 653 353 642 351 605Q345 582 320 582L305 580 297 560 302 530Q302 508 284 501L264 498 254 476 256 460 268 455Q274 440 255 419L233 402 229 383 246 379Q258 367 249 349L223 325 223 307 248 311Q262 296 246 275L235 257 238 238 262 255Q280 254 276 234L270 190 280 190 300 217Q312 226 318 208z" fill="#535a62"/>
          <path d="M385 333C350 340 340 380 347 420C360 500 420 580 485 578C520 575 532 540 526 490C518 440 490 395 460 368L458 345 432 335 415 320 413 334Q395 333 385 333z" fill="url(#bore)"/>
          <path d="M360 350C340 380 345 440 380 500C410 550 450 580 490 578Q515 574 521 552Q495 568 465 556C390 520 350 410 366 362z" fill="#aab7c0"/><path d="M413 320l20 15-20 6z" fill="#7d878e"/>
        </svg>
      </div>
    </div>
    <div class="d-flex align-items-start" style="margin-top:8px;height:28px;padding-top:1px;gap:12px">
      <div class="chk-box d-flex align-items-center" style="padding-left:77px;margin-right:18px"><input class="form-check-input" type="checkbox" id="k1" checked><label class="sl" for="k1" style="padding-left:4px;width:72px">小齿轮</label><input class="form-check-input" type="checkbox" id="k2" checked><label class="sl" for="k2" style="padding-left:4px">大齿轮</label></div>
      <button class="btn cbtn b"><svg width="16" height="18"><use href="#doc"/></svg>相关标准</button>
      <button class="btn cbtn b"><svg width="18" height="18"><use href="#ie"/></svg>网址导航</button>
      <button class="btn cbtn b"><svg width="18" height="18"><use href="#ie"/></svg>企业推广</button>
      <button class="btn cbtn b pe-2" style="gap:12px"><svg width="17" height="17"><path d="M1 9l4-1 1 4 9-11h2L7 16H4z" fill="#17e617" stroke="#0b4d0b" stroke-width=".8"/></svg>确定</button>
      <button class="btn cbtn b pe-2" style="gap:12px"><svg width="15" height="16"><path d="M2 1h8v12H2z" fill="#1010e0" stroke="#000"/><path d="M2 1l5 4v11l-5-3z" fill="#fff" stroke="#000"/><path d="M9 12h4V6M11 8l2-3 2 3" fill="none" stroke="#e01515" stroke-width="1.500"/></svg>退出</button>
    </div>
  </div>
</div>

<div class="site d-flex">
  <svg width="62" height="58" viewBox="0 0 62 58"><path d="M3 38A29 27 0 0 1 50 7Q34 4 24 14L5 38z" fill="#1f8edb"/><path d="M9 39L29 17v18h8V18l-8-3 13-8q16 5 16 25 0 20-18 25V30H28v27q-10-2-14-9l7-4V31z" fill="#fff" opacity=".8"/><path d="M58 24q3 23-19 32v-19h-8v19h-7V44l-14 4-3-5 27-18h11v18q9-6 13-19z" fill="#f59331"/><path d="M24 14l18-7q12 6 12 17H44V14L31 25v12h-8V24l-12 14H5z" fill="#2597e3"/></svg>
  <div class="pt-1"><div class="site-n">河东软件园</div><div class="site-u">www.pc0359.cn</div></div>
</div>
<script src="https://cdn.jsdelivr.net/npm/bootstrap@5.3.0/dist/js/bootstrap.bundle.min.js"></script>
</body>
</html>
